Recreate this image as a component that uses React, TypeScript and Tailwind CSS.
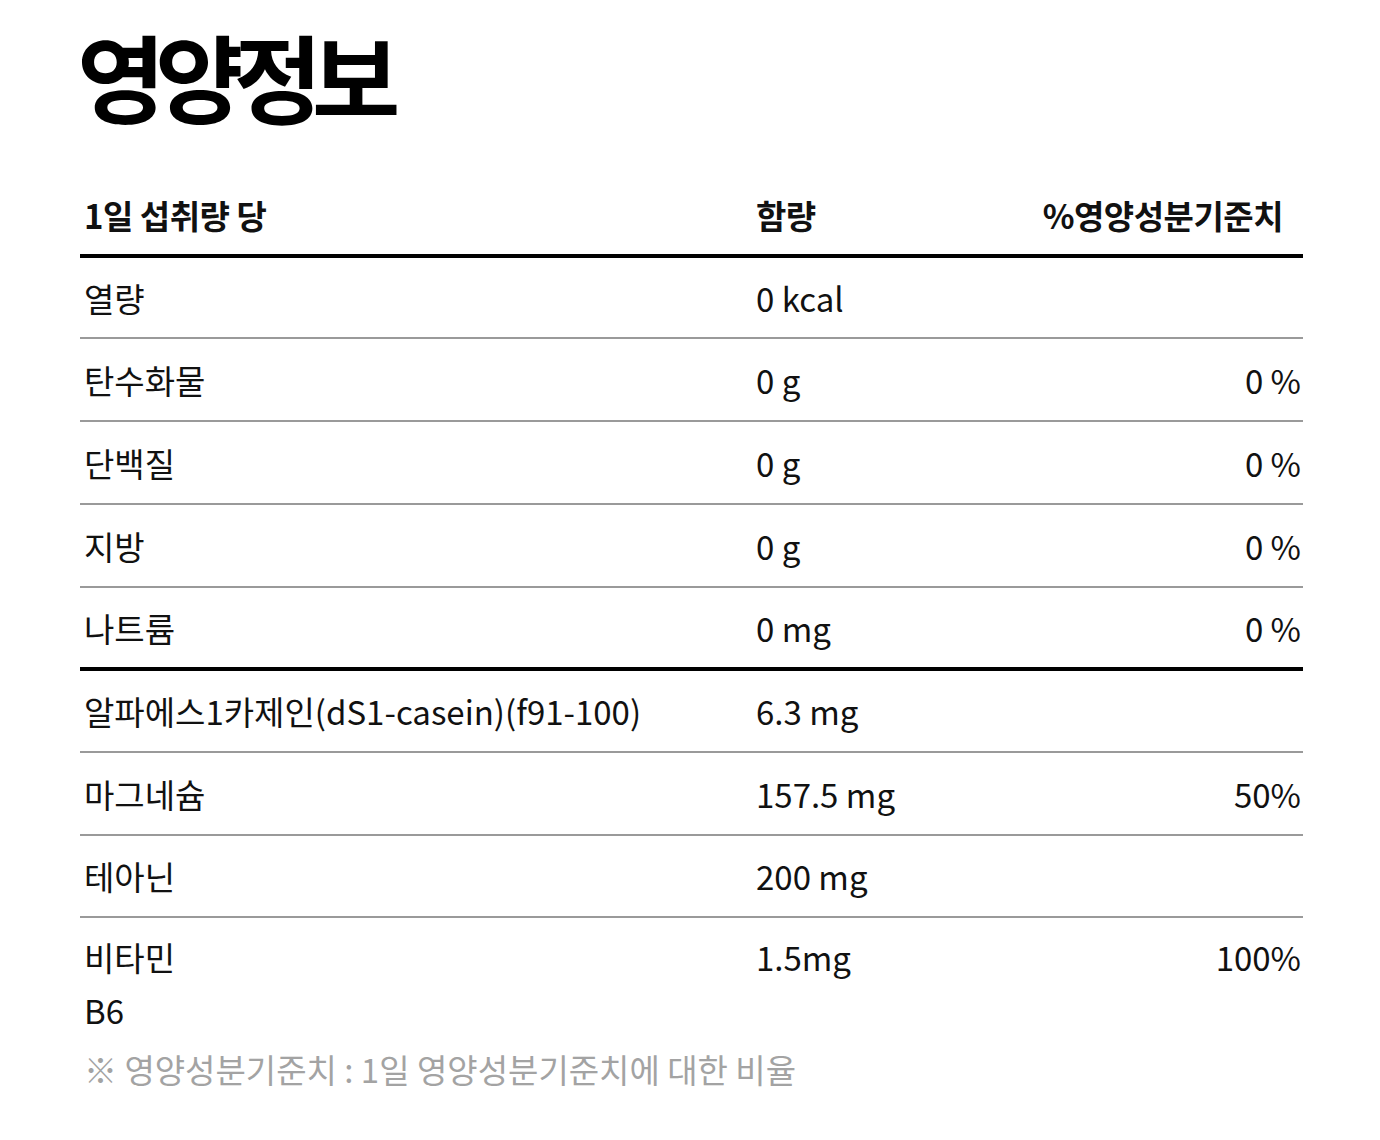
type Row = { name: string; amount: string; pct: string; h: string; thick?: boolean }

const rows: Row[] = [
  { name: "열량", amount: "0 kcal", pct: "", h: "h-[81px]" },
  { name: "탄수화물", amount: "0 g", pct: "0 %", h: "h-[83px]" },
  { name: "단백질", amount: "0 g", pct: "0 %", h: "h-[83px]" },
  { name: "지방", amount: "0 g", pct: "0 %", h: "h-[83px]" },
  { name: "나트륨", amount: "0 mg", pct: "0 %", h: "h-[83px]", thick: true },
  { name: "알파에스1카제인(dS1-casein)(f91-100)", amount: "6.3 mg", pct: "", h: "h-[82px]" },
  { name: "마그네슘", amount: "157.5 mg", pct: "50%", h: "h-[83px]" },
  { name: "테아닌", amount: "200 mg", pct: "", h: "h-[82px]" },
]

export default function App() {
  return (
    <div className="min-h-[1140px] w-[1380px] bg-white font-['Noto_Sans_CJK_KR','Noto_Sans',sans-serif] text-[#111]">
      <div className="ml-[80px] w-[1223px] pt-[27px]">
        {/* Title */}
        <h1 className="-ml-[3px] text-[96px] font-bold leading-[96px] tracking-[-10px] text-black">영양정보</h1>

        {/* Header */}
        <div className="mt-[72px] grid h-[63px] grid-cols-[672px_1fr_auto] items-start border-b-4 border-black pl-[4px] pr-[20px] text-[33px] font-bold leading-[40px] tracking-[-0.5px]">
          <span>1일 섭취량 당</span>
          <span>함량</span>
          <span>%영양성분기준치</span>
        </div>

        {/* Rows */}
        {rows.map((r) => (
          <div
            key={r.name}
            className={`grid ${r.h} grid-cols-[672px_1fr_auto] items-center pl-[4px] pr-[2px] text-[33px] leading-[40px] ${
              r.thick ? "border-b-4 border-black" : "border-b-2 border-[#9a9a9a]"
            }`}
          >
            <span>{r.name}</span>
            <span>{r.amount}</span>
            <span>{r.pct}</span>
          </div>
        ))}

        {/* Vitamin B6 */}
        <div className="grid grid-cols-[672px_1fr_auto] items-start pl-[4px] pr-[2px] pt-[13px] text-[33px] leading-[53px]">
          <span>
            비타민
            <br />
            B6
          </span>
          <span>1.5mg</span>
          <span>100%</span>
        </div>

        {/* Footnote */}
        <p className="mt-[6px] pl-[4px] text-[33px] leading-[53px] text-[#a3a3a3]">
          ※ 영양성분기준치 : 1일 영양성분기준치에 대한 비율
        </p>
      </div>
    </div>
  )
}
